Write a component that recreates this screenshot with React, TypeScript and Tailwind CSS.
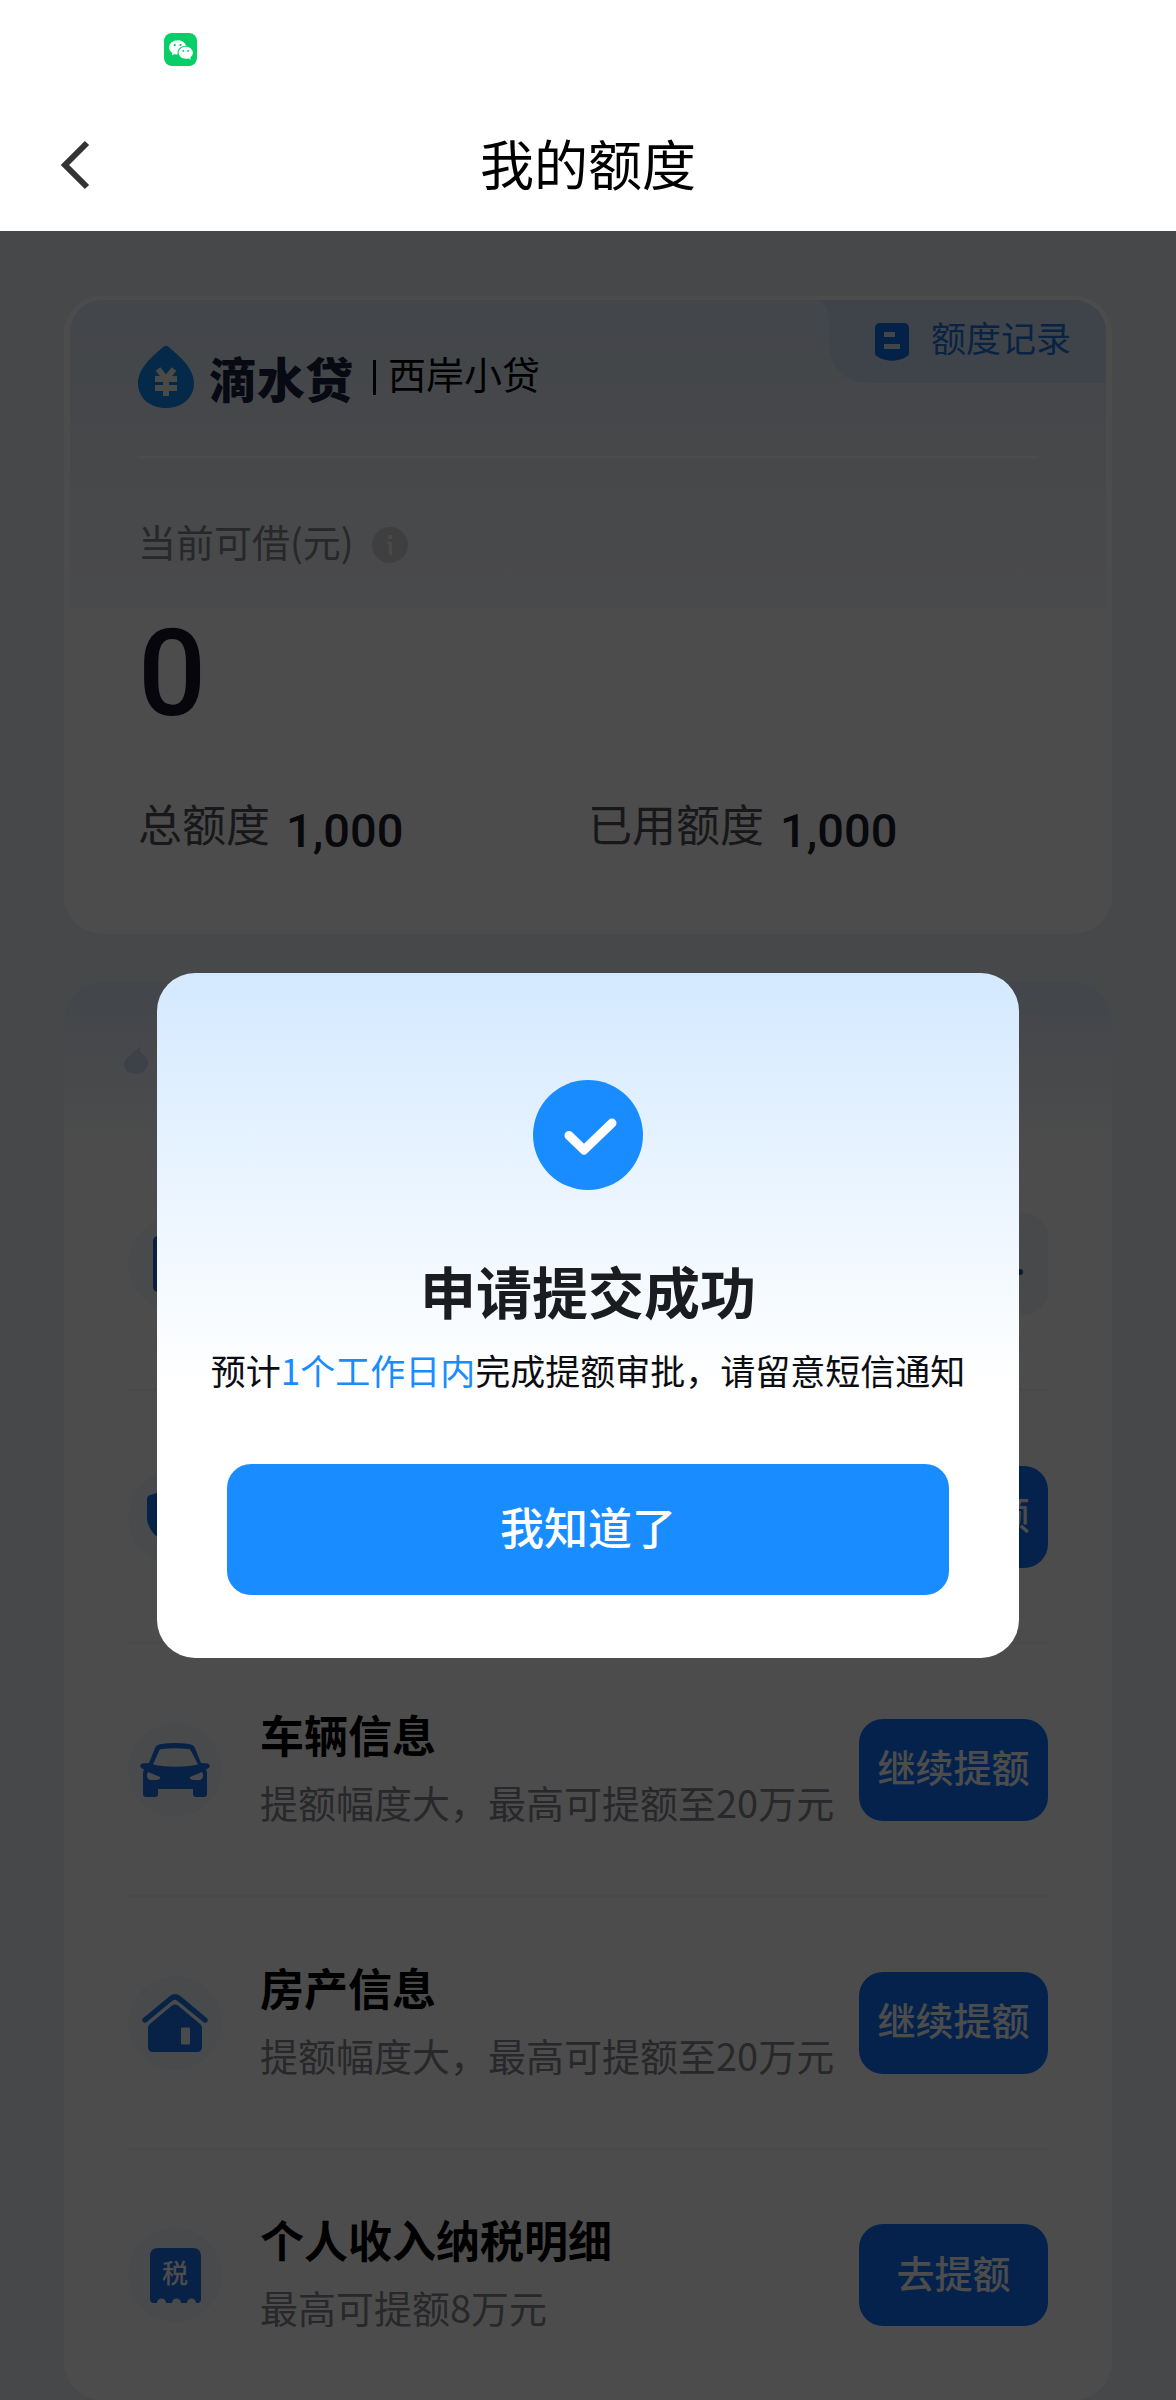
import type { ReactNode } from "react";
import { RiWechatFill } from "react-icons/ri";

type QuotaItem = {
  id: string;
  icon: ReactNode;
  title?: string;
  desc?: string;
  action: string;
  pending?: boolean;
};

const DropLogo = () => (
  <svg width="56" height="62" viewBox="0 0 56 62" aria-hidden="true">
    <path
      d="M24.5 1.5c2-2 5-2 7 0C41 10 56 22 56 37c0 15-12 25-28 25S0 52 0 37C0 22 15 10 24.5 1.5Z"
      fill="#128af2"
    />
    <path
      d="M20 23l8 10 8-10M17 33h22M17 42h22M28 32v18"
      fill="none"
      stroke="#f3f3f0"
      strokeWidth="6"
    />
  </svg>
);

const RecordIcon = () => (
  <svg width="34" height="38" viewBox="0 0 34 38" aria-hidden="true">
    <path
      d="M5 0h24c3 0 5 2 5 5v25c0 2-1 3-3 4-9 5-19 5-28 0-2-1-3-2-3-4V5c0-3 2-5 5-5Z"
      fill="#0f72f0"
    />
    <path d="M9 9h11v5H9zM9 21h16v5H9z" fill="#dbe9fb" />
  </svg>
);

const BillIcon = () => (
  <svg width="44" height="56" viewBox="0 0 44 56" aria-hidden="true">
    <rect width="44" height="56" rx="5" fill="#1d70d8" />
    <path d="M11 16h22M11 28h22M11 40h14" stroke="#fff" strokeWidth="4" />
  </svg>
);

const ShieldIcon = () => (
  <svg width="56" height="58" viewBox="0 0 56 58" aria-hidden="true">
    <path
      d="M28 0l25 7c2 1 3 2 3 4v18c0 15-14 25-28 29C14 54 0 44 0 29V11c0-2 1-3 3-4Z"
      fill="#1577ef"
    />
    <path d="M17 28l8 8 14-15" fill="none" stroke="#fff" strokeWidth="5" />
  </svg>
);

const CarIcon = () => (
  <svg width="70" height="54" viewBox="0 0 70 54" aria-hidden="true">
    <path
      fillRule="evenodd"
      fill="#1a73ec"
      d="M4 26C0 26-1 22 2 20.500L9 20 15 5C16 2.500 18 1.500 21 1 30-.3 40-.3 49 1c3 .5 5 1.500 6 4l6 15 7 .5c3 1.500 2 5.500-2 5.500 1 2 1 4 1 7v17c0 3-1 4-3 4h-8c-2 0-3-1-3-3v-5H18v5c0 2-1 3-3 3H6c-2 0-3-1-3-4V33c0-3 0-5 1-7ZM13 21.500 19 8c.5-1.300 1-2 3-2 9-1 17-1 26 0 2 0 2.500.7 3 2l7 13.500c-15 3-30 3-45 0ZM8 29c-2 3-1 7 2 8h6c2 0 5-1 4-3ZM62 29c2 3 1 7-2 8h-6c-2 0-5-1-4-3Z"
    />
  </svg>
);

const HouseIcon = () => (
  <svg width="66" height="58" viewBox="0 0 66 58" aria-hidden="true">
    <path
      d="M3 26 29 4.500c2.500-2 5.500-2 8 0L63 26"
      fill="none"
      stroke="#1a7bef"
      strokeWidth="5.500"
      strokeLinecap="round"
    />
    <path
      fillRule="evenodd"
      fill="#1a73ec"
      d="M30 11.500c2-1.500 4-1.500 6 0L57 29c2 2 3 3 3 5v19c0 3-2 5-5 5H11c-3 0-5-2-5-5V34c0-2 1-3 3-5ZM39 35v14c0 1 .5 1.500 1.500 1.500h6c1 0 1.500-.5 1.500-1.500V35c0-1-.5-1.500-1.500-1.500h-6c-1 0-1.500.5-1.500 1.500Z"
    />
  </svg>
);

const TaxIcon = () => (
  <span className="relative flex h-[55px] w-[51px] justify-center">
    <svg className="absolute inset-0" width="51" height="55" viewBox="0 0 51 55" aria-hidden="true">
      <path
        d="M8 0h35c5 0 8 3 8 8v43c0 2-1 4-3 4h-2a4.500 4.500 0 0 0-9 0h-6a4.500 4.500 0 0 0-9 0h-6a4.500 4.500 0 0 0-9 0H4c-3 0-4-2-4-4V8c0-5 3-8 8-8Z"
        fill="#1a6fee"
      />
    </svg>
    <span className="relative text-[26px] leading-[48px] font-medium text-white">税</span>
  </span>
);

const items: QuotaItem[] = [
  { id: "bill", icon: <BillIcon />, action: "审核中...", pending: true },
  { id: "insurance", icon: <ShieldIcon />, action: "继续提额" },
  {
    id: "car",
    icon: <CarIcon />,
    title: "车辆信息",
    desc: "提额幅度大，最高可提额至20万元",
    action: "继续提额",
  },
  {
    id: "house",
    icon: <HouseIcon />,
    title: "房产信息",
    desc: "提额幅度大，最高可提额至20万元",
    action: "继续提额",
  },
  {
    id: "tax",
    icon: <TaxIcon />,
    title: "个人收入纳税明细",
    desc: "最高可提额8万元",
    action: "去提额",
  },
];

const QuotaRow = ({ item }: { item: QuotaItem }) => (
  <li className="flex h-[253px] items-center border-b-2 border-[#f4f5f6] last:h-[250px] last:border-b-0">
    <span className="flex size-[94px] shrink-0 items-center justify-center rounded-full bg-[#f6f9fc]">
      {item.icon}
    </span>
    <div className="ml-[38px] min-w-0 flex-1 pb-1 whitespace-nowrap">
      {item.title && <h3 className="text-[44px] leading-[68px] font-bold text-black">{item.title}</h3>}
      {item.desc && <p className="text-[38px] leading-[68px] text-[#86868e]">{item.desc}</p>}
    </div>
    <button
      type="button"
      className={
        item.pending
          ? "h-[102px] w-[189px] shrink-0 rounded-3xl bg-[#f1f5f9] pb-2 text-[37px] font-medium text-[#3c5878]"
          : "h-[102px] w-[189px] shrink-0 rounded-3xl bg-[#1373ff] pb-2 text-[38px] font-medium text-white"
      }
    >
      {item.action}
    </button>
  </li>
);

const LimitStat = ({ label, value }: { label: string; value: string }) => (
  <div className="flex items-center gap-4">
    <dt className="text-[44px] leading-[48px] text-[#50525c]">{label}</dt>
    <dd className="pt-4 font-['Roboto','Noto_Sans_CJK_SC',sans-serif] text-[47px] leading-[48px] font-medium text-[#1c1e2b]">
      {value}
    </dd>
  </div>
);

const LimitCard = () => (
  <section className="rounded-[38px] bg-white px-[6px] py-1">
    <div className="relative overflow-hidden rounded-[32px]">
      <div className="absolute inset-x-0 top-0 h-[308px] bg-gradient-to-b from-[#e0eaf7] to-[#f6f8fa]" />
      <a
        href="#records"
        className="absolute top-0 right-0 flex h-[83px] w-[289px] items-center gap-[22px] pl-[58px] text-[35px] text-[#2476dd]"
      >
        <svg className="absolute inset-0" width="289" height="83" viewBox="0 0 289 83" aria-hidden="true">
          <path d="M0 0c9 2 12 10 12 24v18c0 25 16 41 40 41h237V0Z" fill="#d3e4f9" />
        </svg>
        <span className="relative">
          <RecordIcon />
        </span>
        <span className="relative pb-2">额度记录</span>
      </a>

      <div className="relative px-[68px] pb-[75px]">
        <div className="w-fit pt-[46px]">
          <div className="flex items-center">
            <DropLogo />
            <span className="ml-[15px] text-[48px] leading-[62px] font-black text-[#1d2340]">滴水贷</span>
            <span className="ml-5 h-[35px] w-[3px] bg-black" />
            <span className="ml-3 pb-2 text-[38px] leading-[54px] text-black">西岸小贷</span>
          </div>
        </div>
        <hr className="mt-12 border-t-2 border-white" />

        <div className="mt-[61px] flex items-center">
          <span className="text-[38px] leading-[44px] text-[#85878d]">当前可借(元)</span>
          <button
            type="button"
            aria-label="额度说明"
            className="mt-2 ml-[18px] flex size-9 items-center justify-center rounded-full bg-[#d3d4d6]"
          >
            <svg width="8" height="20" viewBox="0 0 8 20" aria-hidden="true">
              <path d="M2 0h4v4H2zM1 7h5v13H3V9H1z" fill="#f5f5f5" />
            </svg>
          </button>
        </div>
        <p className="mt-[51px] font-['Roboto',sans-serif] text-[120px] leading-[120px] font-medium text-[#151728]">
          0
        </p>
        <dl className="mt-[57px] grid grid-cols-2">
          <LimitStat label="总额度" value="1,000" />
          <LimitStat label="已用额度" value="1,000" />
        </dl>
      </div>
    </div>
  </section>
);

const ResultDialog = () => (
  <div
    role="dialog"
    aria-modal="true"
    aria-labelledby="result-title"
    className="flex w-[862px] flex-col items-center rounded-[38px] bg-white bg-gradient-to-b from-[#d4e9ff] to-white to-60% px-[70px] pt-[107px] pb-[63px]"
  >
    <svg width="110" height="110" viewBox="0 0 110 110" aria-hidden="true">
      <circle cx="55" cy="55" r="55" fill="#198cff" />
      <path
        d="M36 55.500 51 70 79 43"
        fill="none"
        stroke="#fff"
        strokeWidth="9"
        strokeLinecap="round"
        strokeLinejoin="round"
      />
    </svg>
    <h2 id="result-title" className="mt-[60px] text-[56px] leading-[80px] font-bold text-[#1b1c1f]">
      申请提交成功
    </h2>
    <p className="mt-3 text-[35px] leading-[56px] whitespace-nowrap text-[#0c0d12]">
      预计<span className="text-[#198cff]">1个工作日内</span>完成提额审批，请留意短信通知
    </p>
    <button
      type="button"
      className="mt-[66px] h-[131px] w-full rounded-3xl bg-[#198cff] pb-2 text-[44px] font-medium text-white"
    >
      我知道了
    </button>
  </div>
);

export default function App() {
  return (
    <div className="flex min-h-screen flex-col bg-[#eef1f4] font-['Noto_Sans_CJK_SC',sans-serif]">
      <header className="bg-white">
        <div className="flex h-[99px] items-center pl-[164px]">
          <span className="flex size-[33px] items-center justify-center rounded-lg bg-[#06cf68] text-white">
            <RiWechatFill size={26} />
          </span>
        </div>
        <div className="grid h-[132px] grid-cols-[1fr_auto_1fr] items-center px-[60px]">
          <button type="button" aria-label="返回" className="w-fit">
            <svg width="30" height="50" viewBox="0 0 30 50" aria-hidden="true">
              <path d="M27 3 5 25l22 22" fill="none" stroke="#333" strokeWidth="6" />
            </svg>
          </button>
          <h1 className="pb-1 text-[54px] leading-[72px] text-black">我的额度</h1>
        </div>
      </header>

      <main className="relative flex-1 px-16 pt-[65px]">
        <LimitCard />

        <section className="mt-12 rounded-[38px] bg-white bg-gradient-to-b from-[#dfe9f8] to-white to-[170px] px-16">
          <div className="flex h-[156px] items-center">
            <svg className="-ml-1" width="28" height="28" viewBox="0 0 28 28" aria-hidden="true">
              <path d="M17 0c-2 4-1 7 3 9 5 3 5 9 2 14-4 6-14 6-19 2-5-5-3-12 3-16Z" fill="#cbd9f0" />
            </svg>
          </div>
          <ul>
            {items.map((item) => (
              <QuotaRow key={item.id} item={item} />
            ))}
          </ul>
        </section>

        {/* 遮罩层与结果弹窗 */}
        <div className="absolute inset-0 flex items-center justify-center bg-black/70">
          <ResultDialog />
        </div>
      </main>
    </div>
  );
}
